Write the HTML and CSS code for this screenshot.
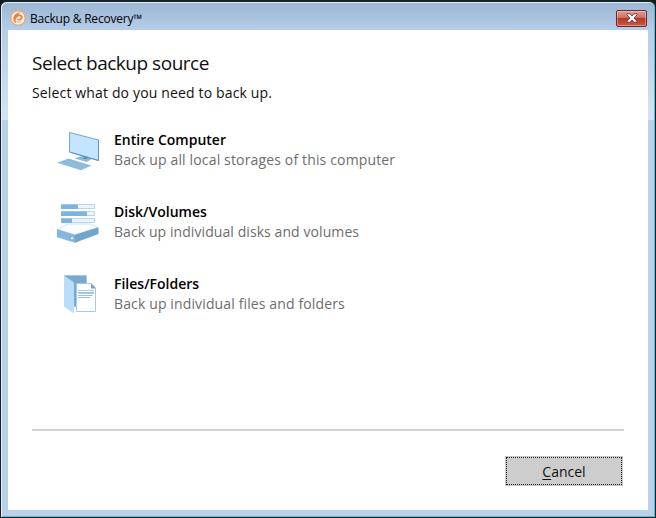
FILE: index.html
```html
<!DOCTYPE html>
<html lang="en">
<head>
<meta charset="utf-8">
<title>Backup &amp; Recovery</title>
<link rel="stylesheet" href="styles.css">
</head>
<body>
<div class="window">
  <header class="titlebar">
    <svg class="app-icon" viewBox="0 0 16 16"><circle cx="8" cy="8" r="7.2" fill="#fff0df" stroke="#e9a779" stroke-width="1.2"/><path d="M10.8 2.8C6.5 2.2 3.4 5 3.3 8.7c0 2.1 1.2 4.1 3.1 4.8C4.8 10.5 5.4 8 8 6.7c2.3-1.1 3.5.5 2.4 1.7-.8.9-2.5.8-3.4.4.3 2.5 4.4 2.2 5.5-.5C13.6 5.7 11.2 4 8.6 4.5c.5-.9 1.2-1.4 2.2-1.7zM7 10.5c.5 2.6 3.1 2.7 4.8.8-1.8.8-3.6.5-4.8-.8z" fill="#e98249"/></svg>
    <span class="caption">Backup &amp; Recovery™</span>
    <button class="close" aria-label="Close"><svg viewBox="0 0 12 10"><path d="M1 .8h3l2 2.3L8 .8h3v1L8.1 5l2.9 3.2v1H8L6 6.9 4 9.2H1v-1L3.9 5 1 1.8z" fill="#fff" stroke="#66414a" stroke-width=".9"/></svg></button>
  </header>
  <main class="client">
    <h1>Select backup source</h1>
    <p class="lead">Select what do you need to back up.</p>
    <ul class="sources">
      <li>
        <svg viewBox="0 0 60 56"><path d="M7 38.7 18.5 34.5 41.5 41.5 31 46.3z" fill="#8fbbda"/><path d="M24 34.3 33 31.8 42.5 34.8 36.5 38z" fill="#8fbbda"/><path d="M33.5 31h4v4h-4z" fill="#5591bb"/><path d="M19.5 8.5 48.5 16V36.5L19.5 28z" fill="#c5e4ff" stroke="#72a8cc"/><path d="M48.5 16V36.5L19.5 28" fill="none" stroke="#5d96bd"/></svg>
        <div class="text"><h2 class="computer">Entire Computer</h2><p>Back up all local storages of this computer</p></div>
      </li>
      <li>
        <svg viewBox="0 0 60 56"><g fill="#eaf4fd" stroke="#b8d6eb"><path d="M11.5 8.5h33v4h-33zM11.5 15.5h33v4h-33zM11.5 22.5h33v4h-33z"/></g><path d="M11 8.5h17v4.5H11zM11 15.5h26V20H11zM11 22.5h11V27H11z" fill="#79b5e3"/><path d="M7.3 33.5 18 28h23L48 31.5 25 38.8z" fill="#fbfdff" stroke="#b8d8ed" stroke-width=".7"/><path d="M7 33.3 25 38.7v8L7 41.2z" fill="#85b7dc"/><path d="M25 38.7 48.5 31.2V38L25 46.7z" fill="#70a6cc"/><circle cx="22" cy="42.3" r="1" fill="#fff"/></svg>
        <div class="text"><h2 class="disk">Disk/Volumes</h2><p class="disk-note">Back up individual disks and volumes</p></div>
      </li>
      <li>
        <svg viewBox="0 0 60 56"><path d="M14.5 7.5h22v31h-22z" fill="#79a9cc" stroke="#a1cae8"/><path d="M14 7.5 24 14.5v31L14 38.5z" fill="#b8defb"/><path d="M26.5 15.5H41l4.5 4.8v23.2h-19z" fill="#fff" stroke="#a7cae2"/><path d="M41 15v5.5h5z" fill="#6fa2c7"/><path d="M28 22.5h16M28 25.5h16" stroke="#a9cee9"/><path d="M28 24.5h16M28 27.5h14.5M28 29.5h12" stroke="#82afce" stroke-width=".8"/></svg>
        <div class="text"><h2 class="files">Files/Folders</h2><p class="files-note">Back up individual files and folders</p></div>
      </li>
    </ul>
    <footer><button class="cancel"><u>C</u>ancel</button></footer>
  </main>
</div>
</body>
</html>
```
FILE: styles.css
```css
* { box-sizing: border-box; }
body { margin: 0; background: #111b22; font-family: "Open Sans", "Noto Sans", sans-serif; }
h1, h2, p, ul { margin: 0; padding: 0; font-weight: 400; white-space: nowrap; }
button { padding: 0; font: inherit; }
.window {
  width: 656px; height: 518px; padding: 0 7px 7px;
  border: 1px solid #17232b; border-width: 2px 1px 1px;
  border-radius: 7px 7px 0 0;
  background: linear-gradient(#9bb5d3, #b5cde8 28px, #d3e4f5 118px, #b9d1ea 118px);
  box-shadow: inset 1px 1px #e2edf7, inset -1px -1px #58bdd4;
}
.titlebar { height: 28px; display: flex; align-items: center; padding: 4px 1px 0 2px; }
.app-icon { width: 16px; height: 16px; }
.caption { margin: 2px 0 0 4px; font-size: 12px; line-height: 18px; letter-spacing: -.22px; color: #000; }
.close {
  width: 31px; height: 17px; margin: 0 0 0 auto; border: 1px solid #6b2931; border-radius: 2px;
  background: linear-gradient(#df9c91, #cf695c 48%, #b83725 50%, #c95a43);
  box-shadow: inset 0 0 0 1px #ffffff55; display: grid; place-items: center;
}
.close svg { width: 12px; height: 10px; }
.client { height: 480px; padding: 20px 24px 24px; background: #fff; display: flex; flex-direction: column; }
h1 { font-size: 19px; line-height: 26px; letter-spacing: -.48px; color: #111; }
.lead { margin-top: 8px; font-size: 14px; line-height: 18px; letter-spacing: .15px; color: #111; }
.sources { list-style: none; margin-top: 22px; }
.sources li { display: flex; height: 72px; margin-left: 18px; }
.sources svg { width: 60px; height: 56px; }
.text { margin: 6px 0 0 4px; }
h2 { font-size: 14px; line-height: 20px; font-weight: 600; color: #000; }
.text p { font-size: 14px; line-height: 20px; letter-spacing: .15px; color: #6d6d6d; }
.text .disk-note { letter-spacing: .08px; }
.text .files-note { letter-spacing: .13px; }
footer { margin-top: auto; height: 57px; border-top: 2px solid #d0d1d5; padding: 25px 1px 0; display: flex; justify-content: flex-end; }
.cancel { width: 118px; height: 30px; border: 1px solid #c7c7c7; background: #cdcdcd; outline: 1px dotted #222; outline-offset: -2px; font-size: 14px; color: #111; }
u { text-underline-offset: 2px; }
```
